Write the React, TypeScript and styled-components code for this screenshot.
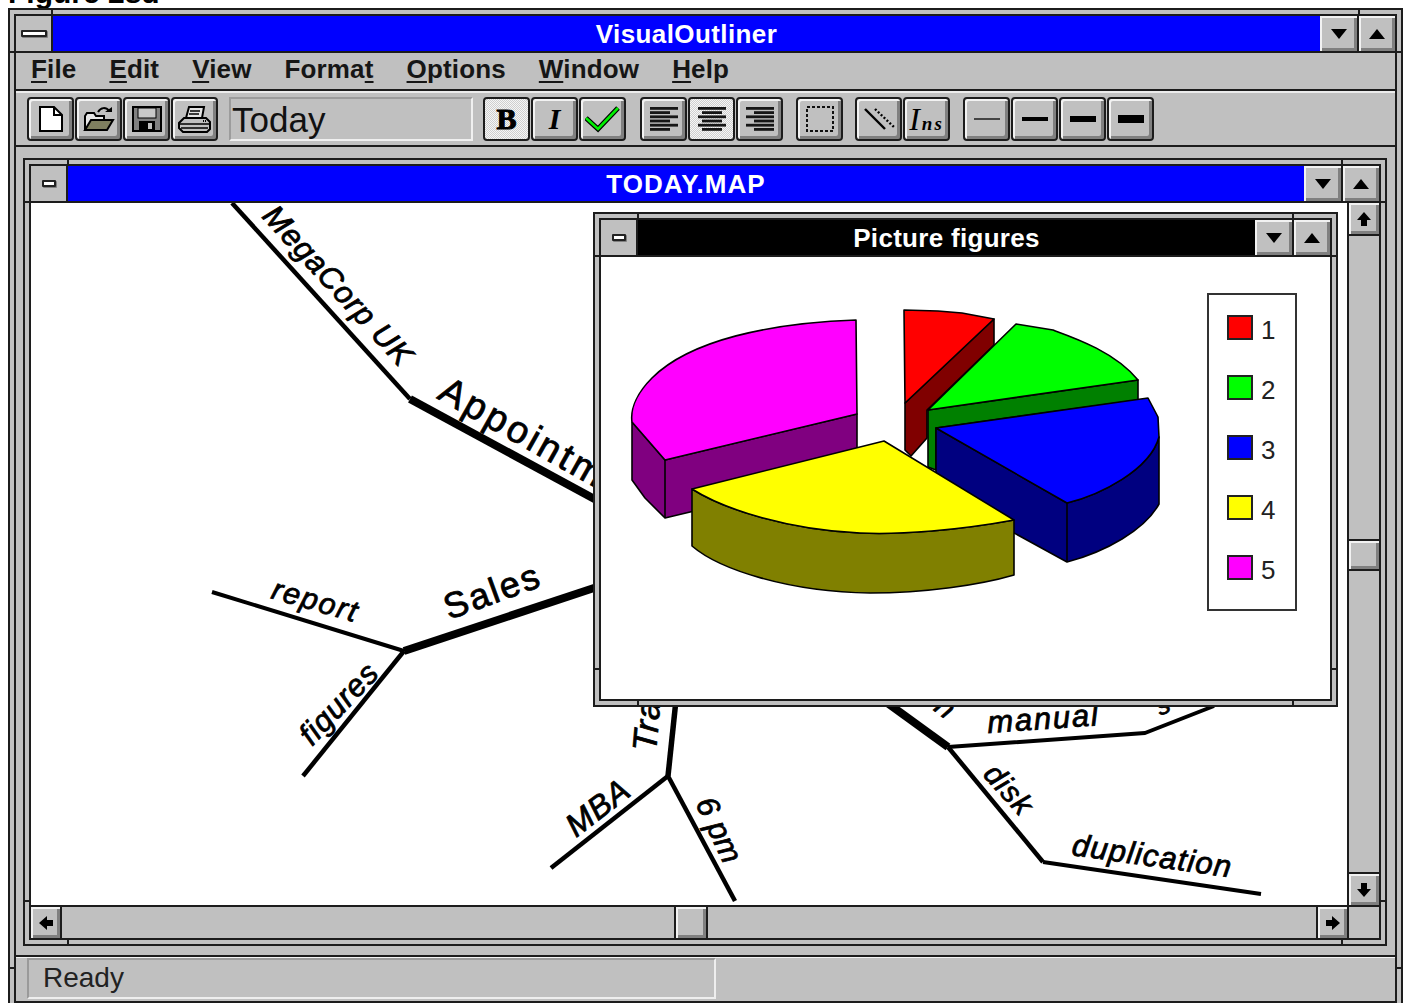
import React from "react";
import styled, { createGlobalStyle, css } from "styled-components";

const DARK = "#1c1c1c";
const FACE = "#c0c0c0";
const SHADE = "#808080";

const Global = createGlobalStyle`
  html, body { margin: 0; padding: 0; background: #fff; }
  body { width: 1406px; height: 1003px; overflow: hidden; font-family: "Liberation Sans", Arial, sans-serif; }
`;

const raised = css`
  background: ${FACE};
  box-shadow: inset 2px 2px 0 #f2f2f2, inset -3px -3px 0 ${SHADE};
`;

const FigureLabel = styled.div`
  box-sizing: border-box;
  height: 8px;
  padding-left: 8px;
  overflow: hidden;
  display: flex;
  align-items: flex-end;
  font-size: 30px;
  font-weight: 700;
  line-height: 30px;
  color: #000;
  white-space: nowrap;
`;

/* Sizing border shared by the three windows: dark line, grey band, dark line. */
const Frame = styled.div`
  box-sizing: border-box;
  position: relative;
  border: 2px solid ${DARK};
  padding: 4px;
  background: ${FACE};
`;

const Shell = styled(Frame)`
  margin-left: 8px;
  width: 1395px;
  height: 1001px;
`;

const DocWindow = styled(Frame)`
  height: 788px;
`;

const FrameBody = styled.div`
  box-sizing: border-box;
  height: 100%;
  border: 2px solid ${DARK};
  display: flex;
  flex-direction: column;
  background: ${FACE};
`;

const HTick = styled.i<{ $edge: "top" | "bottom"; $side: "left" | "right"; $c: number }>`
  position: absolute;
  ${(p) => p.$edge}: 0;
  ${(p) => p.$side}: ${(p) => p.$c}px;
  width: 2px;
  height: 4px;
  background: ${DARK};
`;

const VTick = styled.i<{ $edge: "top" | "bottom"; $side: "left" | "right"; $c: number }>`
  position: absolute;
  ${(p) => p.$side}: 0;
  ${(p) => p.$edge}: ${(p) => p.$c}px;
  width: 4px;
  height: 2px;
  background: ${DARK};
`;

function Ticks({ x, top, bottom }: { x: number; top: number; bottom: number }) {
  return (
    <>
      <HTick $edge="top" $side="left" $c={x} />
      <HTick $edge="top" $side="right" $c={x} />
      <HTick $edge="bottom" $side="left" $c={x} />
      <HTick $edge="bottom" $side="right" $c={x} />
      <VTick $edge="top" $side="left" $c={top} />
      <VTick $edge="top" $side="right" $c={top} />
      <VTick $edge="bottom" $side="left" $c={bottom} />
      <VTick $edge="bottom" $side="right" $c={bottom} />
    </>
  );
}

const TitleRow = styled.div`
  flex: none;
  height: 35px;
  display: flex;
  border-bottom: 2px solid ${DARK};
`;

const SysBox = styled.div`
  flex: none;
  width: 35px;
  border-right: 2px solid ${DARK};
  background: ${FACE};
  display: flex;
  align-items: center;
  justify-content: center;
`;

const SysDash = styled.span<{ $w: number }>`
  box-sizing: border-box;
  display: block;
  width: ${(p) => p.$w}px;
  height: 7px;
  background: #fff;
  border: 2px solid #222;
  border-radius: 1px;
  box-shadow: 1px 1px 0 ${SHADE};
`;

const TitleBar = styled.div<{ $bg: string; $sp: number }>`
  flex: 1;
  background: ${(p) => p.$bg};
  color: #fff;
  font-size: 26px;
  font-weight: 700;
  line-height: 36px;
  text-align: center;
  letter-spacing: ${(p) => p.$sp}px;
`;

const CapButton = styled.div`
  ${raised}
  flex: none;
  box-sizing: border-box;
  width: 37px;
  display: flex;
  align-items: center;
  justify-content: center;
  & + & { border-left: 2px solid ${DARK}; width: 38px; }
`;

const Tri = ({ up }: { up?: boolean }) => (
  <svg width="16" height="10" viewBox="0 0 16 10">
    <polygon points={up ? "8,0 16,10 0,10" : "0,0 16,0 8,10"} fill="#000" />
  </svg>
);

function Caption({ title, bg, dash, sp }: { title: string; bg: string; dash: number; sp: number }) {
  return (
    <TitleRow>
      <SysBox>
        <SysDash $w={dash} />
      </SysBox>
      <TitleBar $bg={bg} $sp={sp}>{title}</TitleBar>
      <CapButton>
        <Tri />
      </CapButton>
      <CapButton>
        <Tri up />
      </CapButton>
    </TitleRow>
  );
}

const MenuBar = styled.nav`
  flex: none;
  box-sizing: border-box;
  height: 38px;
  padding: 0 0 3px 15px;
  display: flex;
  gap: 33px;
  align-items: center;
  border-bottom: 2px solid ${DARK};
  font-size: 26px;
  font-weight: 700;
  letter-spacing: 0.15px;
  color: #161616;
`;

const MenuItem = styled.span`
  u { text-underline-offset: 3px; text-decoration-thickness: 2px; }
`;

const Toolbar = styled.div`
  flex: none;
  box-sizing: border-box;
  height: 56px;
  padding: 6px 0 0 11px;
  display: flex;
  align-items: flex-start;
  border-bottom: 2px solid ${DARK};
  box-shadow: inset 0 2px 0 #ececec;
`;

const ToolGroup = styled.div<{ $ml?: number }>`
  display: flex;
  gap: 1px;
  margin-left: ${(p) => p.$ml ?? 0}px;
`;

const ToolButton = styled.div<{ $down?: boolean }>`
  box-sizing: border-box;
  width: 47px;
  height: 44px;
  border: 2px solid ${DARK};
  border-radius: 4px;
  display: flex;
  align-items: center;
  justify-content: center;
  color: #000;
  ${(p) =>
    p.$down
      ? css`
          background: repeating-conic-gradient(#f6f6f6 0 25%, #cfcfcf 0 50%) 0 0 / 2px 2px;
        `
      : raised}
`;

const Bold = styled.span`
  font-family: "Liberation Serif", "Times New Roman", serif;
  font-size: 30px;
  font-weight: 700;
  line-height: 1;
  -webkit-text-stroke: 1px #000;
`;

const Slant = styled.span`
  font-family: "Liberation Serif", "Times New Roman", serif;
  font-size: 30px;
  font-weight: 700;
  font-style: italic;
  line-height: 1;
`;

const InsLabel = styled.span`
  display: inline-block;
  font-family: "Liberation Serif", "Times New Roman", serif;
  font-size: 19px;
  font-style: italic;
  font-weight: 700;
  letter-spacing: 2px;
  line-height: 1;
  &::first-letter {
    font-size: 32px;
    font-weight: 400;
  }
`;

const Combo = styled.div`
  box-sizing: border-box;
  margin-left: 11px;
  width: 244px;
  height: 44px;
  border: 2px solid;
  border-color: #9c9c9c #f0f0f0 #f0f0f0 #9c9c9c;
  padding-left: 1px;
  font-size: 35px;
  line-height: 41px;
  color: #111;
`;

const Rule = styled.span<{ $h: number }>`
  display: block;
  width: 26px;
  height: ${(p) => p.$h}px;
  background: ${(p) => (p.$h < 3 ? "#444" : "#000")};
`;

const Workspace = styled.div`
  flex: none;
  box-sizing: border-box;
  height: 810px;
  padding: 11px 8px 9px 7px;
  border-bottom: 2px solid ${DARK};
`;

const DocBody = styled.div`
  flex: 1;
  min-height: 0;
  display: grid;
  grid-template-columns: 1fr 32px;
  grid-template-rows: 1fr 33px;
`;

const Canvas = styled.div`
  position: relative;
  background: #fff;
  overflow: hidden;
`;

const ScrollV = styled.div`
  box-sizing: border-box;
  border-left: 2px solid ${DARK};
  display: flex;
  flex-direction: column;
  background: ${FACE};
`;

const ScrollH = styled.div`
  box-sizing: border-box;
  border-top: 2px solid ${DARK};
  display: flex;
  background: ${FACE};
`;

const Track = styled.div`
  flex: 1;
  min-width: 0;
  min-height: 0;
`;

const TrackV = styled(Track)`
  padding-top: 303px;
`;

const TrackH = styled(Track)`
  padding-left: 612px;
`;

const ArrowBox = styled.div<{ $dir: "up" | "down" | "left" | "right" }>`
  ${raised}
  flex: none;
  box-sizing: border-box;
  display: flex;
  align-items: center;
  justify-content: center;
  ${(p) =>
    p.$dir === "up" || p.$dir === "down"
      ? css`
          height: 33px;
          ${p.$dir === "up" ? `border-bottom: 2px solid ${DARK};` : `border-top: 2px solid ${DARK};`}
        `
      : css`
          width: 31px;
          ${p.$dir === "left" ? `border-right: 2px solid ${DARK};` : `border-left: 2px solid ${DARK};`}
        `}
`;

const ThumbV = styled.div`
  ${raised}
  box-sizing: border-box;
  height: 32px;
  border-top: 2px solid ${DARK};
  border-bottom: 2px solid ${DARK};
`;

const ThumbH = styled.div`
  ${raised}
  box-sizing: border-box;
  width: 34px;
  height: 100%;
  border-left: 2px solid ${DARK};
  border-right: 2px solid ${DARK};
`;

const Corner = styled.div`
  box-sizing: border-box;
  border-left: 2px solid ${DARK};
  border-top: 2px solid ${DARK};
  background: ${FACE};
`;

const FatArrow = ({ dir }: { dir: "up" | "down" | "left" | "right" }) => {
  const rot = { up: 0, right: 90, down: 180, left: 270 }[dir];
  return (
    <svg width="18" height="18" viewBox="0 0 18 18">
      <path d="M9 2 L16 10 H12 V16 H6 V10 H2 Z" fill="#000" transform={`rotate(${rot} 9 9)`} />
    </svg>
  );
};

const StatusBar = styled.div`
  flex: 1;
  min-height: 0;
  padding: 1px 0 0 11px;
  box-shadow: inset 0 1px 0 #f4f4f4;
`;

const StatusCell = styled.div`
  box-sizing: border-box;
  width: 689px;
  height: 41px;
  border: 2px solid;
  border-color: #9a9a9a #eeeeee #eeeeee #9a9a9a;
  padding-left: 14px;
  font-size: 28px;
  line-height: 36px;
  color: #222;
`;

const PictureWindow = styled(Frame)`
  position: absolute;
  left: 562px;
  top: 9px;
  width: 745px;
  height: 495px;
`;

const PictureArea = styled.div`
  flex: 1;
  min-height: 0;
  background: #fff;
  display: flex;
`;

const MapSvg = styled.svg`
  display: block;
  position: absolute;
  left: 0;
  top: 0;
`;

const MapText = styled.text<{ $upright?: boolean }>`
  font-family: "Liberation Sans", Arial, sans-serif;
  font-style: ${(p) => (p.$upright ? "normal" : "italic")};
  fill: #000;
`;

const LegendDigit = styled.text`
  font-family: "Liberation Sans", Arial, sans-serif;
  font-size: 26px;
  fill: #222;
`;

type Branch = { pts: string; w: number };
const branches: Branch[] = [
  { pts: "232,203 410,399", w: 4.5 },
  { pts: "410,399 600,502", w: 8 },
  { pts: "404,651 600,586", w: 8 },
  { pts: "212,592 404,651", w: 4 },
  { pts: "303,776 404,651", w: 4.5 },
  { pts: "676,700 668,776", w: 5.5 },
  { pts: "551,868 668,776", w: 4.5 },
  { pts: "735,901 668,776", w: 4.5 },
  { pts: "886,702 948,747", w: 8 },
  { pts: "948,747 1145,733 1214,706", w: 4 },
  { pts: "948,747 1043,862", w: 4.5 },
  { pts: "1043,862 1261,894", w: 4 },
];

type Label = { t: string; x: number; y: number; a: number; s: number; sp?: number; up?: boolean; end?: boolean };
const labels: Label[] = [
  { t: "MegaCorp UK", x: 261, y: 217, a: 47.5, s: 31, sp: 0.8 },
  { t: "Appointment", x: 436, y: 398, a: 29.4, s: 38, sp: 3.2, up: true },
  { t: "Sales", x: 449, y: 620, a: -20, s: 36, sp: 2.2, up: true },
  { t: "report", x: 270, y: 598, a: 16, s: 30, sp: 1.8 },
  { t: "figures", x: 312, y: 747, a: -46.6, s: 31, sp: 1 },
  { t: "Training", x: 656, y: 752, a: -85, s: 34, sp: 1 },
  { t: "MBA", x: 576, y: 838, a: -37.6, s: 32, sp: 0.8 },
  { t: "6 pm", x: 695, y: 803, a: 65, s: 31 },
  { t: "manual", x: 988, y: 733, a: -4, s: 31, sp: 1.8 },
  { t: "disk", x: 982, y: 775, a: 48, s: 30, sp: 1 },
  { t: "duplication", x: 1071, y: 855, a: 8, s: 31, sp: 1.2 },
  { t: "Production", x: 946, y: 720, a: 38, s: 30, end: true },
  { t: "s", x: 1172, y: 711, a: -22, s: 26, end: true },
];

/* Mind map branches and their labels; the view box uses window coordinates. */
function MindMap() {
  return (
    <MapSvg width="1316" height="702" viewBox="31 203 1316 702">
      {branches.map((b) => (
        <polyline key={b.pts} points={b.pts} fill="none" stroke="#000" strokeWidth={b.w} strokeLinejoin="bevel" />
      ))}
      {labels.map((l) => (
        <MapText
          key={l.t}
          x={l.x}
          y={l.y}
          fontSize={l.s}
          letterSpacing={l.sp ?? 0}
          $upright={l.up}
          stroke="#000"
          strokeWidth={0.8}
          textAnchor={l.end ? "end" : "start"}
          transform={`rotate(${l.a} ${l.x} ${l.y})`}
        >
          {l.t}
        </MapText>
      ))}
    </MapSvg>
  );
}

const legend = [
  { c: "#ff0000", y: 316, n: "1" },
  { c: "#00ff00", y: 376, n: "2" },
  { c: "#0000ff", y: 436, n: "3" },
  { c: "#ffff00", y: 496, n: "4" },
  { c: "#ff00ff", y: 556, n: "5" },
];

const edge = { stroke: "#000", strokeWidth: 1.6, strokeLinejoin: "round" as const };

/* Exploded 3D pie with its legend; drawn back to front so nearer slices cover the rest. */
function PieChart() {
  return (
    <svg width="729" height="442" viewBox="601 257 729 442">
      <path
        d="M632 422 L665 460 L857 414 V472 L665 518 L645 498 L632 480 Z"
        fill="#800080"
        {...edge}
      />
      <line x1="665" y1="460" x2="665" y2="518" {...edge} />
      <path d="M856 320 C770 323 690 340 652 378 C638 392 630 408 632 422 L665 460 L857 414 Z" fill="#ff00ff" {...edge} />

      <path d="M905 403 L994 319 V345 L927 410 V438 L911 456 L905 450 Z" fill="#800000" {...edge} />
      <path d="M904 310 L938 311 L962 313 L994 319 L905 403 Z" fill="#ff0000" {...edge} />

      <path d="M928 410 L1138 380 V400 L936 428 V470 L928 467 Z" fill="#008000" {...edge} />
      <path d="M1016 324 L1053 330 C1075 338 1115 352 1138 380 L928 410 Z" fill="#00ff00" {...edge} />

      <path
        d="M936 428 L1067 503 C1100 495 1150 470 1159 437 V504 C1145 530 1105 552 1067 562 L936 490 Z"
        fill="#000080"
        {...edge}
      />
      <line x1="1067" y1="503" x2="1067" y2="562" {...edge} />
      <path d="M936 428 L1148 398 L1158 417 L1159 437 C1150 470 1100 495 1067 503 Z" fill="#0000ff" {...edge} />

      <path
        d="M692 489 V546 C720 570 790 592 870 593 C925 593 980 585 1014 575 V520 C960 530 900 535 860 533 C790 530 725 510 692 489 Z"
        fill="#808000"
        {...edge}
      />
      <path d="M692 489 L884 441 L1014 520 C960 530 900 535 860 533 C790 530 725 510 692 489 Z" fill="#ffff00" {...edge} />

      <rect x="1208" y="294" width="88" height="316" fill="#fff" stroke="#333" strokeWidth="2" />
      {legend.map((l) => (
        <g key={l.n}>
          <rect x="1228" y={l.y} width="24" height="23" fill={l.c} stroke="#222" strokeWidth="2" />
          <LegendDigit x="1261" y={l.y + 23}>
            {l.n}
          </LegendDigit>
        </g>
      ))}
    </svg>
  );
}

const NewIcon = () => (
  <svg width="26" height="28" viewBox="0 0 26 28">
    <path d="M2 2 H16 L24 10 V26 H2 Z" fill="#fff" stroke="#000" strokeWidth="2" />
    <path d="M16 2 V10 H24" fill="none" stroke="#000" strokeWidth="2" />
  </svg>
);

const OpenIcon = () => (
  <svg width="32" height="28" viewBox="0 0 32 28">
    <path d="M2 25 V11 L4 8 H11 L13 11 H21 V15" fill="#e8e8e8" stroke="#000" strokeWidth="2" />
    <path d="M2 25 L8 15 H30 L24 25 Z" fill="#7f7f5f" stroke="#000" strokeWidth="2" />
    <path d="M15 7 C18 2 23 2 26 6" fill="none" stroke="#000" strokeWidth="2" />
    <path d="M22 7 H29 V2 Z" fill="#000" />
  </svg>
);

const SaveIcon = () => (
  <svg width="30" height="28" viewBox="0 0 30 28">
    <rect x="1" y="2" width="28" height="24" fill="#808080" stroke="#000" strokeWidth="2" />
    <rect x="6" y="3" width="18" height="10" fill="#c8c8c8" stroke="#000" strokeWidth="1" />
    <rect x="7" y="16" width="16" height="10" fill="#000" />
    <rect x="16" y="18" width="4" height="6" fill="#c0c0c0" />
  </svg>
);

const PrintIcon = () => (
  <svg width="36" height="28" viewBox="0 0 36 28">
    <path d="M9 13 L12 2 H27 L25 13 Z" fill="#e4e4e4" stroke="#000" strokeWidth="2" />
    <path d="M13 6 H23 M12 9 H22" stroke="#000" strokeWidth="1.5" />
    <path d="M7 13 H29 L33 17 V24 L30 27 H6 L2 23 V18 Z" fill="#c0c0c0" stroke="#000" strokeWidth="2" />
    <path d="M3 19 H32 M4 23 H31" stroke="#000" strokeWidth="1.5" />
    <path d="M26 16 h4" stroke="#000" strokeWidth="2" strokeDasharray="1 1" />
  </svg>
);

const CheckIcon = () => (
  <svg width="36" height="28" viewBox="0 0 36 28">
    <polyline points="1,13 13,24 33,3" fill="none" stroke="#000" strokeWidth="5" />
    <polyline points="1,13 13,24 33,3" fill="none" stroke="#00f000" strokeWidth="2.6" />
  </svg>
);

const AlignIcon = ({ mode }: { mode: "left" | "center" | "right" }) => {
  const widths = [28, 20, 28, 20, 28, 20];
  return (
    <svg width="30" height="26" viewBox="0 0 30 26">
      {widths.map((w, i) => {
        const x = mode === "left" ? 1 : mode === "right" ? 29 - w : 15 - w / 2;
        return <rect key={i} x={x} y={1 + i * 4.2} width={w} height="2.8" fill="#161616" />;
      })}
    </svg>
  );
};

const FrameIcon = () => (
  <svg width="30" height="28" viewBox="0 0 30 28">
    <rect x="2" y="2" width="26" height="24" fill="none" stroke="#111" strokeWidth="2" strokeDasharray="3 2" />
  </svg>
);

const LineToolIcon = () => (
  <svg width="32" height="24" viewBox="0 0 32 24">
    <line x1="2" y1="2" x2="22" y2="22" stroke="#000" strokeWidth="2.4" />
    <line x1="12" y1="2" x2="31" y2="20" stroke="#000" strokeWidth="2.4" strokeDasharray="2 2" />
  </svg>
);

const menus: React.ReactNode[] = [
  <><u>F</u>ile</>,
  <><u>E</u>dit</>,
  <><u>V</u>iew</>,
  <>Forma<u>t</u></>,
  <><u>O</u>ptions</>,
  <><u>W</u>indow</>,
  <><u>H</u>elp</>,
];

export default function App() {
  return (
    <>
      <Global />
      <FigureLabel>Figure 2sd</FigureLabel>
      <Shell>
        <Ticks x={41} top={41} bottom={38} />
        <FrameBody>
          <Caption title="VisualOutliner" bg="#0000ff" dash={26} sp={0.4} />
          <MenuBar>
            {menus.map((m, i) => (
              <MenuItem key={i}>{m}</MenuItem>
            ))}
          </MenuBar>
          <Toolbar>
            <ToolGroup>
              <ToolButton><NewIcon /></ToolButton>
              <ToolButton><OpenIcon /></ToolButton>
              <ToolButton><SaveIcon /></ToolButton>
              <ToolButton><PrintIcon /></ToolButton>
            </ToolGroup>
            <Combo>Today</Combo>
            <ToolGroup $ml={10}>
              <ToolButton $down><Bold>B</Bold></ToolButton>
              <ToolButton><Slant>I</Slant></ToolButton>
              <ToolButton><CheckIcon /></ToolButton>
            </ToolGroup>
            <ToolGroup $ml={14}>
              <ToolButton><AlignIcon mode="left" /></ToolButton>
              <ToolButton $down><AlignIcon mode="center" /></ToolButton>
              <ToolButton><AlignIcon mode="right" /></ToolButton>
            </ToolGroup>
            <ToolGroup $ml={13}>
              <ToolButton><FrameIcon /></ToolButton>
            </ToolGroup>
            <ToolGroup $ml={12}>
              <ToolButton><LineToolIcon /></ToolButton>
              <ToolButton><InsLabel>Ins</InsLabel></ToolButton>
            </ToolGroup>
            <ToolGroup $ml={13}>
              <ToolButton><Rule $h={2} /></ToolButton>
              <ToolButton><Rule $h={4} /></ToolButton>
              <ToolButton><Rule $h={6} /></ToolButton>
              <ToolButton><Rule $h={8} /></ToolButton>
            </ToolGroup>
          </Toolbar>
          <Workspace>
            <DocWindow>
              <Ticks x={42} top={41} bottom={42} />
              <FrameBody>
                <Caption title="TODAY.MAP" bg="#0000ff" dash={14} sp={1} />
                <DocBody>
                  <Canvas>
                    <MindMap />
                    <PictureWindow>
                      <Ticks x={42} top={41} bottom={35} />
                      <FrameBody>
                        <Caption title="Picture figures" bg="#000" dash={14} sp={0.3} />
                        <PictureArea>
                          <PieChart />
                        </PictureArea>
                      </FrameBody>
                    </PictureWindow>
                  </Canvas>
                  <ScrollV>
                    <ArrowBox $dir="up"><FatArrow dir="up" /></ArrowBox>
                    <TrackV><ThumbV /></TrackV>
                    <ArrowBox $dir="down"><FatArrow dir="down" /></ArrowBox>
                  </ScrollV>
                  <ScrollH>
                    <ArrowBox $dir="left"><FatArrow dir="left" /></ArrowBox>
                    <TrackH><ThumbH /></TrackH>
                    <ArrowBox $dir="right"><FatArrow dir="right" /></ArrowBox>
                  </ScrollH>
                  <Corner />
                </DocBody>
              </FrameBody>
            </DocWindow>
          </Workspace>
          <StatusBar>
            <StatusCell>Ready</StatusCell>
          </StatusBar>
        </FrameBody>
      </Shell>
    </>
  );
}
